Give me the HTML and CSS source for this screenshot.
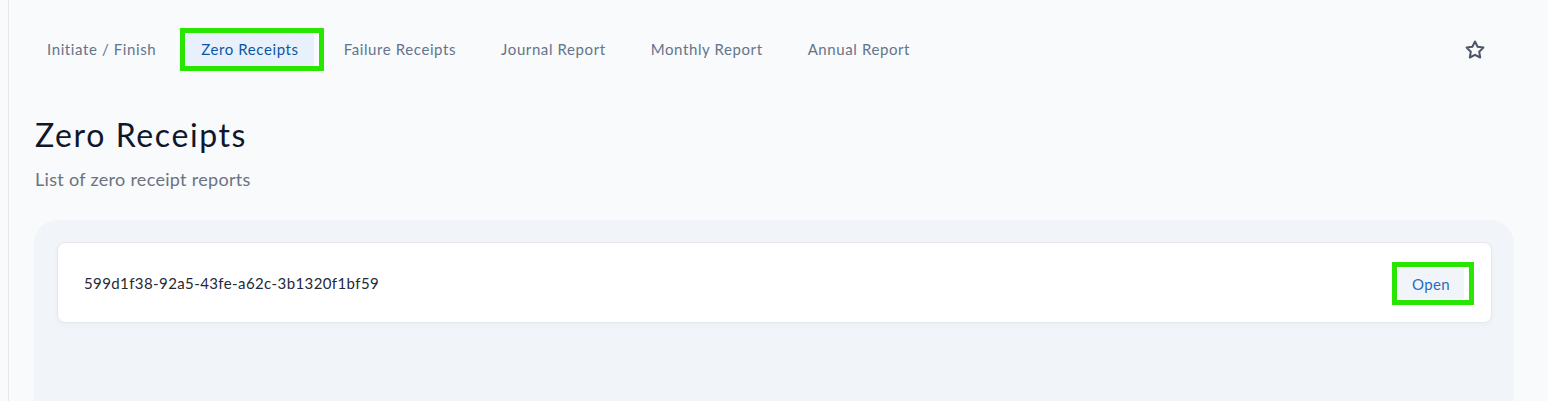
FILE: index.html
```html
<!DOCTYPE html>
<html lang="en">
<head>
    <meta charset="UTF-8">
    <meta name="viewport" content="width=device-width, initial-scale=1.0">
    <title>Zero Receipts</title>
    <link rel="stylesheet" href="styles.css">
</head>
<body>
    <div class="shell">
        <!-- Tabs -->
        <nav class="tabs">
            <a class="tab">Initiate / Finish</a>
            <a class="tab active marked">Zero Receipts</a>
            <a class="tab">Failure Receipts</a>
            <a class="tab">Journal Report</a>
            <a class="tab">Monthly Report</a>
            <a class="tab">Annual Report</a>
            <button class="star" title="Favourite">
                <svg width="24" height="24" viewBox="0 0 24 24" fill="none" stroke="currentColor" stroke-width="2" stroke-linejoin="round">
                    <path d="M12 3.5l2.6 5.3 5.8.8-4.2 4.1 1 5.8L12 16.8l-5.2 2.7 1-5.8-4.2-4.1 5.8-.8z"/>
                </svg>
            </button>
        </nav>

        <h1>Zero Receipts</h1>
        <p class="subtitle">List of zero receipt reports</p>

        <!-- Report list -->
        <div class="panel">
            <div class="card">
                <span class="report-id">599d1f38-92a5-43fe-a62c-3b1320f1bf59</span>
                <button class="open marked">Open</button>
            </div>
        </div>
    </div>
</body>
</html>
```

FILE: styles.css
```css
body {
    margin: 0;
    font-family: Lato, "Open Sans", sans-serif;
    background: #f8fafc;
    height: 100vh;
    overflow: hidden;
}

.shell {
    margin-left: 8px;
    border-left: 1px solid #e5e7eb;
    height: 100%;
    padding: 33px 34px 0 25px;
    box-sizing: border-box;
    display: flex;
    flex-direction: column;
}

.tabs {
    display: flex;
    align-items: center;
    gap: 15px;
    margin-left: -2px;
    padding-right: 27px;
}

.tab {
    position: relative;
    padding: 0 15px;
    height: 33px;
    line-height: 32px;
    font-size: 15px;
    letter-spacing: 0.6px;
    color: #64748b;
    cursor: pointer;
}

.tab.active {
    background: #e8f0fb;
    color: #0b57a4;
}

.marked::after {
    content: "";
    position: absolute;
    left: -6px;
    right: -10px;
    top: -5px;
    bottom: -5px;
    border: 5px solid #28e600;
    pointer-events: none;
}

.star {
    margin-left: auto;
    background: transparent;
    border: none;
    padding: 0;
    color: #4b5567;
    display: flex;
    cursor: pointer;
}

h1 {
    margin: 49px 0 0 1px;
    font-size: 32px;
    line-height: 40px;
    font-weight: 400;
    letter-spacing: 1.6px;
    color: #0f172a;
}

.subtitle {
    margin: 12px 0 0 1px;
    font-size: 18px;
    line-height: 24px;
    letter-spacing: 0.3px;
    color: #6b7280;
}

.panel {
    flex: 1;
    margin-top: 29px;
    background: #f1f5f9;
    border-radius: 24px 24px 0 0;
    padding: 22px 22px 0 23px;
}

.card {
    display: flex;
    align-items: center;
    justify-content: space-between;
    height: 81px;
    box-sizing: border-box;
    padding: 0 27px 0 26px;
    background: #fff;
    border: 1px solid #e5e7eb;
    border-radius: 8px;
    box-shadow: 0 2px 6px rgba(15, 23, 42, 0.03);
}

.report-id {
    font-size: 15px;
    letter-spacing: 0.4px;
    color: #1f2937;
}

.open {
    position: relative;
    top: 1px;
    font-family: inherit;
    font-size: 15px;
    letter-spacing: 0.4px;
    color: #1e6fc0;
    background: #f1f5f9;
    border: none;
    width: 66px;
    height: 31px;
    padding: 0;
    cursor: pointer;
}

.open.marked::after {
    top: -6px;
    bottom: -6px;
}
```
